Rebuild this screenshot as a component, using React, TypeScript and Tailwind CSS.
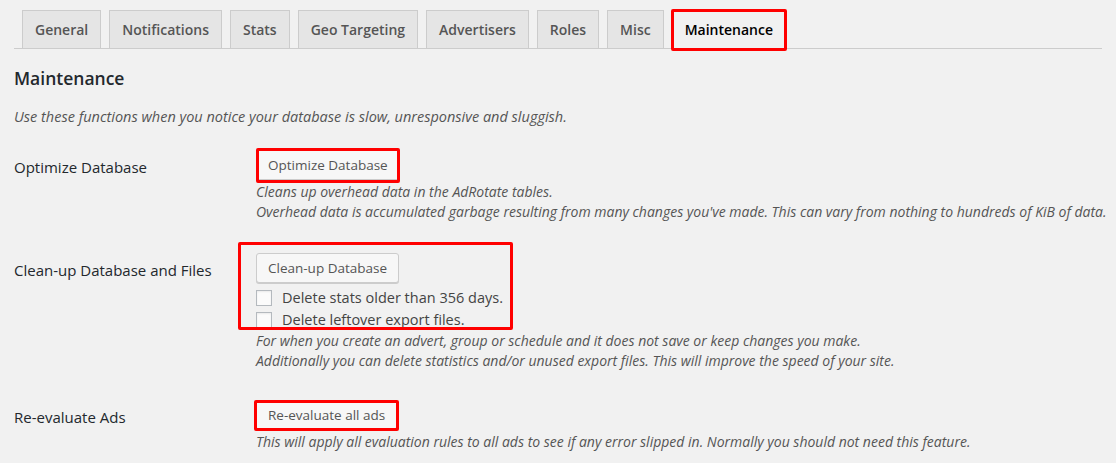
import type { ReactNode } from "react";

const tabs = ["General", "Notifications", "Stats", "Geo Targeting", "Advertisers", "Roles", "Misc", "Maintenance"];

function RedBox({ className }: { className: string }) {
  return <span className={"pointer-events-none absolute rounded-[2px] border-[3px] border-[#ff0000] " + className} />;
}

function WpButton({ children, boxed }: { children: ReactNode; boxed?: string }) {
  return (
    <span className="relative inline-flex">
      <button className="h-[30px] rounded-[3px] border border-[#cccccc] bg-[#f7f7f7] px-[11px] text-[13.5px] leading-[28px] text-[#555555] shadow-[0_1px_0_#cccccc]">
        {children}
      </button>
      {boxed && <RedBox className={boxed} />}
    </span>
  );
}

function Desc({ children }: { children: ReactNode }) {
  return <p className="whitespace-nowrap text-[14px] italic leading-[20px] text-[#555555]">{children}</p>;
}

function Row({ label, children, className }: { label: string; children: ReactNode; className: string }) {
  return (
    <div className={"flex " + className}>
      <div className="w-[242px] shrink-0 pt-[7px] text-[15px] leading-[20px] text-[#23282d]">{label}</div>
      <div className="flex flex-col items-start">{children}</div>
    </div>
  );
}

function Check({ label }: { label: string }) {
  return (
    <label className="flex h-[22px] items-center gap-[10px] text-[14.5px] text-[#444444]">
      <span className="h-[16px] w-[16px] shrink-0 border border-[#b4b9be] bg-[#fbfbfb] shadow-[inset_0_1px_2px_rgba(0,0,0,0.07)]" />
      {label}
    </label>
  );
}

export default function App() {
  return (
    <div className="h-[463px] w-full overflow-hidden bg-[#f1f1f1] px-[14px] font-['Open_Sans',sans-serif]">
      <div className="flex items-end gap-2 border-b border-[#cccccc] pl-2 pt-[10px]">
        {tabs.map((t) =>
          t === "Maintenance" ? (
            <div
              key={t}
              className="relative -mb-px h-[39px] border border-b-0 border-[#cccccc] bg-[#f1f1f1] px-[12px] pt-[7px] text-[14px] font-semibold leading-6 text-black"
            >
              {t}
              <RedBox className="-left-[2px] -right-[2px] -top-[2px] -bottom-[2px]" />
            </div>
          ) : (
            <div
              key={t}
              className="h-[38px] border border-b-0 border-[#cccccc] bg-[#e5e5e5] px-[12px] pt-[7px] text-[14px] font-semibold leading-6 text-[#555555]"
            >
              {t}
            </div>
          )
        )}
      </div>

      <h2 className="mt-[17px] text-[17.5px] font-semibold leading-6 text-[#23282d]">Maintenance</h2>
      <p className="mt-[17px] text-[14.5px] italic leading-[20px] text-[#555555]">
        Use these functions when you notice your database is slow, unresponsive and sluggish.
      </p>

      <Row label="Optimize Database" className="mt-[23px]">
        <WpButton boxed="-left-0 -right-0 -top-[2px] -bottom-[3px]">Optimize Database</WpButton>
        <div className="mt-[2px]">
          <Desc>Cleans up overhead data in the AdRotate tables.</Desc>
          <Desc>
            Overhead data is accumulated garbage resulting from many changes you've made. This can vary from nothing to
            hundreds of KiB of data.
          </Desc>
        </div>
      </Row>

      <Row label="Clean-up Database and Files" className="mt-[31px]">
        <div className="relative">
          <WpButton>Clean-up Database</WpButton>
          <div className="mt-[4px]">
            <Check label="Delete stats older than 356 days." />
            <Check label="Delete leftover export files." />
          </div>
          <RedBox className="-left-[18px] -top-[11px] -bottom-[-1px] -right-[10px]" />
        </div>
        <div className="mt-0">
          <Desc>For when you create an advert, group or schedule and it does not save or keep changes you make.</Desc>
          <Desc>Additionally you can delete statistics and/or unused export files. This will improve the speed of your site.</Desc>
        </div>
      </Row>

      <Row label="Re-evaluate Ads" className="mt-[29px]">
        <WpButton boxed="-left-[2px] -right-[2px] -top-0 -bottom-[1px]">Re-evaluate all ads</WpButton>
        <div className="mt-[2px]">
          <Desc>This will apply all evaluation rules to all ads to see if any error slipped in. Normally you should not need this feature.</Desc>
        </div>
      </Row>
    </div>
  );
}
